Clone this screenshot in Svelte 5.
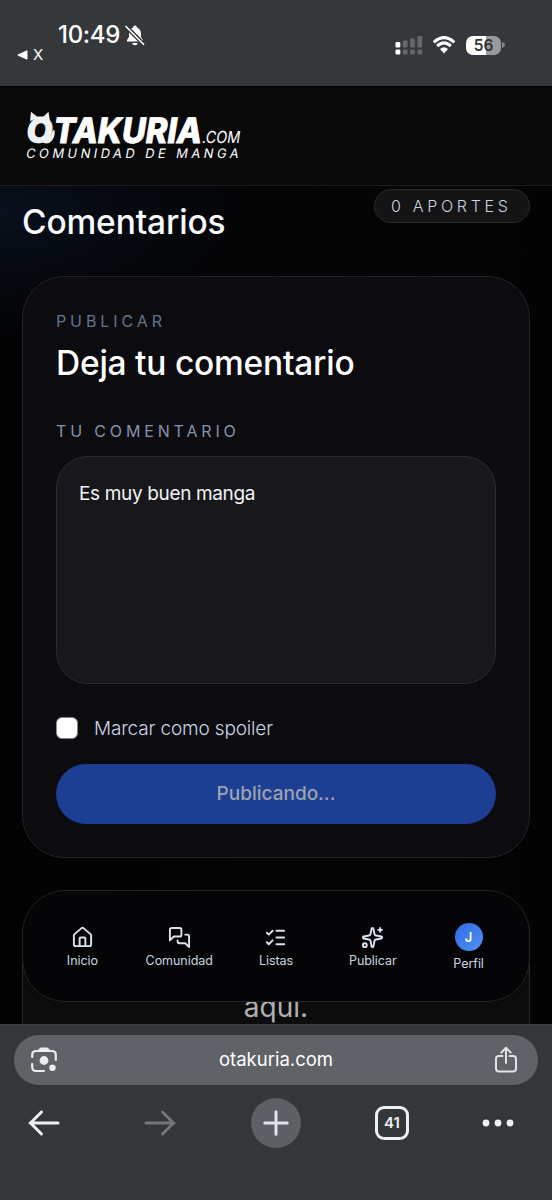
<script>
  let comment = $state('Es muy buen manga');
  let spoiler = $state(false);
  const bars = [5.5, 7, 9, 11.5];
</script>

<div class="phone">
  <header class="status">
    <div class="clock">
      <div class="time">
        <span>10:49</span>
        <svg width="20" height="21" viewBox="0 0 20 21">
          <path d="M2 16.5V15l2-3V8.5Q4.300 4 8 2.500Q8.500.5 10 .5T12 2.500Q15.700 4 16 8.500V12l2 3v1.500zM7 18h6q-.7 2.200-3 2.200T7 18z" fill="#fff" />
          <path d="M1 1.500 19.500 20" stroke="#35383b" stroke-width="4.200" />
          <path d="M1 1.500 18.500 19.300" stroke="#fff" stroke-width="1.600" stroke-linecap="round" />
        </svg>
      </div>
      <div class="back"><svg width="11" height="10" viewBox="0 0 11 10"><path d="M10 .8v8.400L.8 5z" fill="#fff" stroke="#fff" stroke-linejoin="round" /></svg><span>X</span></div>
    </div>
    <div class="signals">
      <svg class="cell" width="28" height="20" viewBox="0 0 28 20">
        {#each bars as h, i}
          <rect x={i * 7.300 + 0.500} y={12.500 - h} width="4.800" height={h} rx="1.300" fill={i ? '#65686b' : '#fff'} />
          <rect x={i * 7.300 + 0.500} y="14.500" width="4.800" height="5" rx="1.300" fill={i ? '#65686b' : '#fff'} />
        {/each}
      </svg>
      <svg class="wifi" width="24" height="18" viewBox="0 0 24 18">
        <g fill="none" stroke="#fff" stroke-width="3"><path d="M1.700 6.400Q12-3.300 22.300 6.400" /><path d="M5.200 10.200Q12 3.700 18.800 10.200" /></g>
        <path d="M8 13Q12 9.500 16 13l-4 4.500z" fill="#fff" />
      </svg>
      <div class="battery"><span>56</span></div>
      <svg class="tip" width="3" height="6" viewBox="0 0 3 6"><path d="M0 0Q3 1 3 3T0 6z" fill="#88898b" /></svg>
    </div>
  </header>

  <div class="brand">
    <svg width="240" height="52" viewBox="0 0 240 52">
      <g fill="#fff" font-family="Inter, sans-serif">
        <text transform="translate(-1 32.500) skewX(-7)" font-size="35" font-weight="900" textLength="27" lengthAdjust="spacingAndGlyphs" fill="#eff0f2">O</text>
        <text transform="translate(26 32.500) skewX(-9)" font-size="35" font-weight="800" textLength="148.500" lengthAdjust="spacingAndGlyphs" stroke="#fff" stroke-width=".8">TAKURIA</text>
        <text transform="translate(175.500 32.500) skewX(-9)" font-size="16.500" font-weight="400" textLength="38" lengthAdjust="spacingAndGlyphs">.COM</text>
        <text transform="translate(-.5 47.500) skewX(-10)" font-size="13" font-weight="400" letter-spacing="3.500" textLength="216" lengthAdjust="spacing" font-family="Inter, sans-serif">COMUNIDAD DE MANGA</text>
      </g>
      <path d="M4 11 5 1.800l6 4.600h6.500l5-4.600L24 11l-6-2.500h-7z" fill="#eff0f2" />
      <path d="M17 29.500Q24.500 29 26 22.500q1-2.800 2.500-2.300Q29.500 26 26 30.500t-9 2z" fill="#eff0f2" />
    </svg>
  </div>

  <main>
    <div class="heading">
      <h1>Comentarios</h1>
      <span class="count">0 APORTES</span>
    </div>

    <section class="card">
      <p class="eyebrow">PUBLICAR</p>
      <h2>Deja tu comentario</h2>
      <label class="eyebrow field" for="comment">TU COMENTARIO</label>
      <textarea id="comment" bind:value={comment} spellcheck="false"></textarea>
      <label class="spoiler">
        <input type="checkbox" bind:checked={spoiler} />
        <span>Marcar como spoiler</span>
      </label>
      <button class="submit" disabled>Publicando...</button>
    </section>

    <section class="empty"><p>aquí.</p></section>

    <nav>
      <a href="#inicio">
        <svg class="ico" viewBox="0 0 24 24"><path d="M15 21v-8a1 1 0 0 0-1-1h-4a1 1 0 0 0-1 1v8" /><path d="M3 10a2 2 0 0 1 .709-1.528l7-5.999a2 2 0 0 1 2.582 0l7 5.999A2 2 0 0 1 21 10v9a2 2 0 0 1-2 2H5a2 2 0 0 1-2-2z" /></svg>
        <span>Inicio</span>
      </a>
      <a href="#comunidad">
        <svg class="ico" viewBox="0 0 24 24"><path d="M14 9a2 2 0 0 1-2 2H6l-4 4V4a2 2 0 0 1 2-2h8a2 2 0 0 1 2 2z" /><path d="M18 9h2a2 2 0 0 1 2 2v11l-4-4h-6a2 2 0 0 1-2-2v-1" /></svg>
        <span>Comunidad</span>
      </a>
      <a href="#listas">
        <svg class="ico" viewBox="0 0 24 24"><path d="m3 17 2 2 4-4M3 7l2 2 4-4M13 5h8M13 12h8M13 19h8" /></svg>
        <span>Listas</span>
      </a>
      <a href="#publicar">
        <svg class="ico" viewBox="0 0 24 24"><path d="M11.017 2.814a1 1 0 0 1 1.966 0l1.051 5.558a2 2 0 0 0 1.594 1.594l5.558 1.051a1 1 0 0 1 0 1.966l-5.558 1.051a2 2 0 0 0-1.594 1.594l-1.051 5.558a1 1 0 0 1-1.966 0l-1.051-5.558a2 2 0 0 0-1.594-1.594l-5.558-1.051a1 1 0 0 1 0-1.966l5.558-1.051a2 2 0 0 0 1.594-1.594z" /><path d="M20 2v4M22 4h-4" /><circle cx="4" cy="20" r="2" /></svg>
        <span>Publicar</span>
      </a>
      <a href="#perfil" class="profile">
        <b>J</b>
        <span>Perfil</span>
      </a>
    </nav>
  </main>

  <footer>
    <div class="url">
      <svg width="28" height="28" viewBox="0 0 28 28" fill="none" stroke="#e9edf1" stroke-width="2.200" stroke-linecap="round">
        <path d="M2.200 11V9Q2.200 5 6.200 5h15.600q4 0 4 4v5M2.200 18v3q0 4 4 4H14" />
        <path d="M9 4.500 11 2.500h6l2 2z" fill="#e9edf1" stroke-linejoin="round" />
        <circle cx="14" cy="14.500" r="4.400" fill="#e9edf1" stroke="none" /><circle cx="22.500" cy="21.700" r="3.200" fill="#e9edf1" stroke="none" />
      </svg>
      <span>otakuria.com</span>
      <svg width="24" height="28" viewBox="0 0 24 28" fill="none" stroke="#e0e4e8" stroke-width="2" stroke-linecap="round" stroke-linejoin="round">
        <path d="M8.500 10H5q-3 0-3 3v9.500q0 3 3 3h14q3 0 3-3V13q0-3-3-3h-3.500M12 17V2M7.300 6.500 12 1.800l4.700 4.700" />
      </svg>
    </div>
    <div class="tools">
      <svg class="prev" width="34" height="28" viewBox="0 0 34 28" fill="none" stroke="#edf1f4" stroke-width="3" stroke-linecap="round" stroke-linejoin="round"><path d="M31 14H3M14.500 3 3.500 14l11 11" /></svg>
      <svg width="34" height="28" viewBox="0 0 34 28" fill="none" stroke="#747678" stroke-width="3" stroke-linecap="round" stroke-linejoin="round"><path d="M3 14h28M19.500 3l11 11-11 11" /></svg>
      <div class="plus"><svg width="26" height="26" viewBox="0 0 26 26" stroke="#dfe4e8" stroke-width="3" stroke-linecap="round"><path d="M1.800 13h22.400M13 1.800v22.400" /></svg></div>
      <div class="tabs">41</div>
      <svg width="34" height="10" viewBox="0 0 34 10" fill="#edf1f4"><circle cx="5" cy="5" r="3.400" /><circle cx="17" cy="5" r="3.400" /><circle cx="29" cy="5" r="3.400" /></svg>
    </div>
  </footer>
</div>

<style>
  :global(body) { margin: 0; background: #000; }
  * { box-sizing: border-box; }
  h1, h2, p { margin: 0; font-weight: 500; }
  svg { display: block; flex: none; }
  .phone { width: 552px; height: 1200px; display: flex; flex-direction: column; overflow: hidden; font-family: Inter, sans-serif; color: #f8fafc; }

  .status { flex: none; height: 86px; background: #35383b; display: flex; justify-content: space-between; padding: 23px 47px 0 17px; }
  .time { display: flex; align-items: center; gap: 5px; padding-left: 41px; height: 24px; font-size: 24px; font-weight: 500; line-height: 24px; letter-spacing: -.3px; color: #fff; }
  .back { display: flex; align-items: center; gap: 5px; height: 15px; font-size: 15px; line-height: 15px; font-weight: 400; color: #fff; }
  .signals { display: flex; align-items: center; height: 20px; margin-top: 12px; }
  .wifi { margin: 0 10px 0 9px; }
  .battery { width: 35px; height: 19px; border-radius: 7px; background: linear-gradient(90deg, #fff 56%, #98999b 56%); color: #303335; font-size: 15.500px; font-weight: 600; line-height: 19px; text-align: center; }
  .tip { margin-left: 1px; }

  .brand { flex: none; height: 100px; padding: 23px 0 0 26px; background: #09090a; border-bottom: 1.500px solid #1e1e20; border-top: 1px solid #020203; }

  main { position: relative; flex: none; height: 838px; overflow: hidden; padding: 0 22px; background: radial-gradient(ellipse 270px 140px at 0 25px, #08101c, #05080e 50%, transparent), linear-gradient(90deg, #020202, #050505 65%, #030304); }
  .heading { display: flex; justify-content: space-between; align-items: flex-start; height: 90px; padding-top: 3px; }
  h1 { font-size: 33.500px; line-height: 40px; padding-top: 13px; letter-spacing: -.15px; }
  .count { width: 156px; height: 34px; border: 1.500px solid #2b2b2d; border-radius: 17px; background: #141415; color: #cbd5e1; font-size: 16px; font-weight: 300; line-height: 33px; padding-left: 16px; letter-spacing: 3.700px; white-space: nowrap; }

  .card { height: 582px; border: 1px solid #242428; border-radius: 42px; background: #0b0b10; padding: 33px; display: flex; flex-direction: column; }
  .eyebrow { font-size: 16px; line-height: 22px; letter-spacing: 3.900px; color: #64748b; font-weight: 400; }
  h2 { margin-top: 10px; font-size: 33.500px; line-height: 43px; letter-spacing: -.23px; color: #fff; font-weight: 500; }
  .field { margin-top: 35px; color: #8593aa; letter-spacing: 3.850px; }
  textarea { display: block; width: 440px; height: 228px; margin: 14px 0 0; border: 1.500px solid #2d2d31; border-radius: 32px; background: #18181c; color: #f1f3f7; padding: 23px 22px; font: 400 19px/28px Inter, sans-serif; letter-spacing: -.35px; resize: none; outline: none; }
  .spoiler { display: flex; align-items: center; gap: 16px; height: 28px; margin-top: 30px; font-size: 19px; font-weight: 300; letter-spacing: -.15px; color: #cbd5e1; }
  input { appearance: none; width: 22px; height: 22px; margin: 0; border: 1.500px solid #888; border-radius: 6px; background: #fff; }
  .submit { height: 60px; width: 440px; margin-top: 22px; border: 0; border-radius: 30px; background: #1c3f93; color: #9ca3af; font: 500 19px/60px Inter, sans-serif; padding: 0; }

  .empty { height: 300px; margin-top: 32px; border: 1px solid #29292b; border-radius: 46px; background: #0c0c0d; }
  .empty p { padding-top: 100px; text-align: center; font-size: 28px; line-height: 32px; color: #b0b0b2; font-weight: 400; }

  nav { position: absolute; left: 22px; top: 704px; width: 508px; height: 112px; border: 1.500px solid #222224; border-radius: 43px; background: #050507; display: grid; grid-template-columns: repeat(5, 1fr); padding: 0 11px; }
  nav a { display: flex; flex-direction: column; align-items: center; padding-top: 35px; color: #cbd5e1; text-decoration: none; font-size: 12.500px; line-height: 16px; }
  nav span { margin-top: 4px; white-space: nowrap; letter-spacing: -.05px; }
  .ico { width: 23px; height: 23px; fill: none; stroke: #dbe3ee; stroke-width: 2; stroke-linecap: round; stroke-linejoin: round; }
  nav a.profile { padding-top: 32px; margin: 0 1px 0 -1px; }
  .profile b { width: 28px; height: 28px; border-radius: 50%; background: linear-gradient(135deg, #3269e5, #4e93f4); color: #fff; font-size: 13px; line-height: 28px; text-align: center; font-weight: 600; }
  .profile span { margin-top: 5px; }

  footer { flex: none; height: 176px; background: #343739; border-top: 1px solid #3b3c3e; padding: 10px 14px 0; }
  .url { height: 50px; border-radius: 25px; background: #5f6266; display: flex; align-items: center; justify-content: space-between; padding: 0 20px 0 16px; color: #fff; font-size: 18.500px; }
  .url span { padding-bottom: 2px; }
  .tools { height: 50px; margin: 13px -14px 0; display: grid; grid-template-columns: 102px 116px 116px 116px 96px; align-items: center; justify-items: center; justify-content: start; }
  .prev { margin-right: 14px; }
  .plus { width: 50px; height: 50px; border-radius: 50%; background: #5c5f64; display: grid; place-items: center; }
  .tabs { width: 34px; height: 34px; border: 3px solid #edf1f4; border-radius: 9px; color: #edf1f4; font-size: 15px; font-weight: 600; line-height: 28px; text-align: center; }
</style>
